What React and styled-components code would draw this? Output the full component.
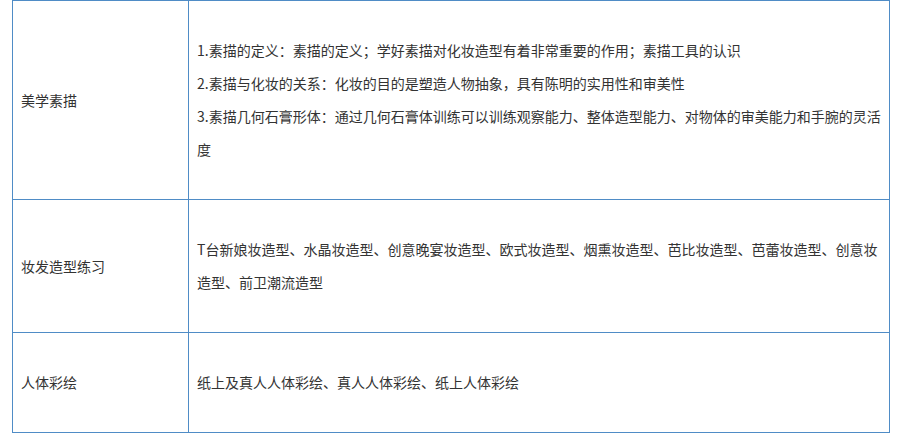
import React from 'react'
import styled, { createGlobalStyle } from 'styled-components'

const GlobalStyle = createGlobalStyle`
  html, body {
    margin: 0;
    padding: 0;
    background: #ffffff;
  }
  body {
    font-family: "Noto Sans CJK SC", "Microsoft YaHei", sans-serif;
    font-size: 14px;
    color: #333333;
  }
`

const courses = [
  {
    name: '美学素描',
    height: 198,
    lines: [
      '1.素描的定义：素描的定义；学好素描对化妆造型有着非常重要的作用；素描工具的认识',
      '2.素描与化妆的关系：化妆的目的是塑造人物抽象，具有陈明的实用性和审美性',
      '3.素描几何石膏形体：通过几何石膏体训练可以训练观察能力、整体造型能力、对物体的审美能力和手腕的灵活度',
    ],
  },
  {
    name: '妆发造型练习',
    height: 132,
    lines: [
      'T台新娘妆造型、水晶妆造型、创意晚宴妆造型、欧式妆造型、烟熏妆造型、芭比妆造型、芭蕾妆造型、创意妆造型、前卫潮流造型',
    ],
  },
  {
    name: '人体彩绘',
    height: 99,
    lines: ['纸上及真人人体彩绘、真人人体彩绘、纸上人体彩绘'],
  },
]

function App() {
  return (
    <>
      <GlobalStyle />
      <Page>
        <Table rows={courses.map(c => c.height)}>
          {courses.map(c => (
            <React.Fragment key={c.name}>
              <NameCell>{c.name}</NameCell>
              <DetailCell>
                <div>
                  {c.lines.map(line => (
                    <Line key={line}>{line}</Line>
                  ))}
                </div>
              </DetailCell>
            </React.Fragment>
          ))}
        </Table>
      </Page>
    </>
  )
}

export default App

const Page = styled.div`
    padding-left: 12px;
    width: 878px;
`

const Table = styled.div`
    display: grid;
    grid-template-columns: 175px 700px;
    grid-template-rows: ${props => props.rows.map(h => `${h}px`).join(' ')};
    gap: 1px;
    padding: 1px 1px 1px 1px;
    background: #4f8cc6;
`

const Cell = styled.div`
    background: #ffffff;
    display: flex;
    align-items: center;
    line-height: 33px;
`

const NameCell = styled(Cell)`
    padding: 0 8px;
`

const DetailCell = styled(Cell)`
    padding: 0 7px 0 8px;
`

const Line = styled.p`
    margin: 0;
`
